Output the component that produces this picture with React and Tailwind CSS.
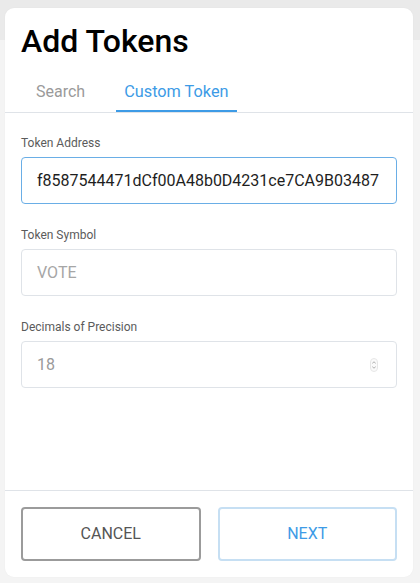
import React from "react";

function Field({ label, children, focused }) {
  return (
    <div className="flex flex-col">
      <div className="text-[12px] leading-4 text-[#5b5b5b]">{label}</div>
      <div
        className={
          "mt-[6px] h-[47px] rounded-[4px] border flex items-center pl-[15px] pr-[16px] " +
          (focused ? "border-[#6aaee6]" : "border-[#dfe3e8]")
        }
      >
        {children}
      </div>
    </div>
  );
}

export default function App() {
  return (
    <div
      className="h-[583px] w-[420px] pl-[5px] pr-[7px] pt-[8px] pb-[6px] bg-[linear-gradient(to_bottom,#eaeaea_0px,#eaeaea_40px,#f4f4f4_40px,#f4f4f4_100%)]"
      style={{ fontFamily: "Roboto, 'Liberation Sans', sans-serif" }}
    >
      <div className="h-full flex flex-col bg-white rounded-[9px] shadow-[0_0_2px_rgba(0,0,0,0.04)]">
        <div className="pt-[14px] px-4">
          <h1 className="text-[32px] leading-[38px] font-medium text-black tracking-[0px]">Add Tokens</h1>
        </div>
        <div className="mt-[20px] flex border-b border-[#dfe3e8] px-[16px]">
          <div className="px-[15px] pb-[8px] text-[16px] leading-6 text-[#9a9a9a]">Search</div>
          <div className="ml-[16px] px-[8px] pb-[6px] text-[16.3px] leading-6 text-[#3d9be6] border-b-2 border-[#3d9be6]">
            Custom Token
          </div>
        </div>
        <div className="flex-1 px-4 pt-[22px] flex flex-col gap-[23px]">
          <Field label="Token Address" focused>
            <span className="text-[16px] text-[#1e1e1e] whitespace-nowrap tracking-[0px]">
              f8587544471dCf00A48b0D4231ce7CA9B03487
            </span>
          </Field>
          <Field label="Token Symbol">
            <span className="text-[16px] text-[#a6a6a6]">VOTE</span>
          </Field>
          <Field label="Decimals of Precision">
            <span className="flex-1 text-[16px] text-[#9a9a9a]">18</span>
            <svg width="8" height="14" viewBox="0 0 8 14" className="mr-[2px]">
              <rect x="0.5" y="0.5" width="7" height="13" rx="3.5" fill="#fafafa" stroke="#e6e6e6" />
              <path d="M2.3 5.3 L4 3.8 L5.7 5.3" fill="none" stroke="#9a9a9a" strokeWidth="0.8" />
              <path d="M2.3 8.7 L4 10.2 L5.7 8.7" fill="none" stroke="#9a9a9a" strokeWidth="0.8" />
            </svg>
          </Field>
        </div>
        <div className="border-t border-[#dfe3e8] px-4 pt-4 pb-4 flex gap-[17px]">
          <button className="flex-1 h-[54px] rounded-[4px] border-2 border-[#9b9b9b] text-[16px] text-[#555] bg-white">
            CANCEL
          </button>
          <button className="flex-1 h-[54px] rounded-[4px] border-2 border-[#c6dff3] text-[16px] text-[#3d9be6] bg-white">
            NEXT
          </button>
        </div>
      </div>
    </div>
  );
}
